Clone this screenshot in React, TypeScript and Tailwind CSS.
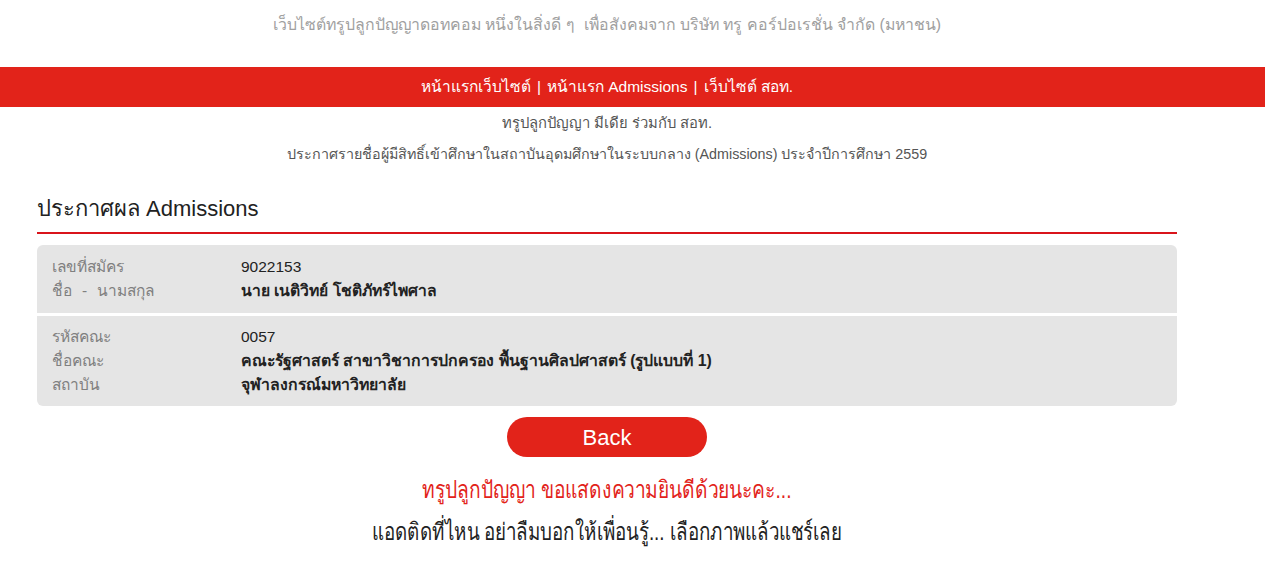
export default function App() {
  const font = { fontFamily: '"Liberation Sans", "Noto Sans", sans-serif' };

  return (
    <div className="min-h-[565px] bg-white" style={font}>
      {/* top tagline */}
      <div className="w-[1214px] h-[67px] flex items-start justify-center pt-[14px]">
        <p className="text-[15.85px] leading-[22px] text-[#a0a0a0]">
          เว็บไซต์ทรูปลูกปัญญาดอทคอม หนึ่งในสิ่งดี ๆ&nbsp; เพื่อสังคมจาก บริษัท ทรู คอร์ปอเรชั่น จำกัด (มหาชน)
        </p>
      </div>

      {/* red nav bar */}
      <div className="h-[40px] bg-[#e2231a]">
        <div className="w-[1214px] h-full flex items-center justify-center text-white text-[15.5px]">
          <span>หน้าแรกเว็บไซต์</span>
          <span className="mx-[6px] font-light">|</span>
          <span>หน้าแรก Admissions</span>
          <span className="mx-[6px] font-light">|</span>
          <span>เว็บไซต์ สอท.</span>
        </div>
      </div>

      <div className="w-[1214px] flex flex-col items-center text-[#555] leading-[20px] pt-[6px]">
        <p className="text-[14.8px]">ทรูปลูกปัญญา มีเดีย ร่วมกับ สอท.</p>
        <p className="mt-[11px] text-[14.3px]">
          ประกาศรายชื่อผู้มีสิทธิ์เข้าศึกษาในสถาบันอุดมศึกษาในระบบกลาง (Admissions) ประจำปีการศึกษา 2559
        </p>
      </div>

      <div className="ml-[37px] w-[1140px] mt-[30px]">
        <h1 className="text-[22px] leading-[30px] text-[#222] pb-[8px] border-b-2 border-[#d9141b]">
          ประกาศผล Admissions
        </h1>

        <div className="mt-[11px] rounded-[6px] overflow-hidden flex flex-col gap-[3px] leading-[24px]">
          <div className="bg-[#e5e5e5] px-[15px] py-[10px] grid grid-cols-[189px_1fr]">
            <span className="text-[#808080] text-[15.5px]">เลขที่สมัคร</span>
            <span className="text-[#222] text-[15.5px]">9022153</span>
            <span className="text-[#808080] text-[15.5px]">
              ชื่อ<span className="px-[10px]">-</span>นามสกุล
            </span>
            <span className="text-[#222] text-[15.7px] font-bold">นาย เนติวิทย์ โชติภัทร์ไพศาล</span>
          </div>
          <div className="bg-[#e5e5e5] px-[15px] py-[9px] grid grid-cols-[189px_1fr]">
            <span className="text-[#808080] text-[15.5px]">รหัสคณะ</span>
            <span className="text-[#222] text-[15.5px]">0057</span>
            <span className="text-[#808080] text-[15.5px]">ชื่อคณะ</span>
            <span className="text-[#222] text-[15.8px] font-bold">
              คณะรัฐศาสตร์ สาขาวิชาการปกครอง พื้นฐานศิลปศาสตร์ (รูปแบบที่ 1)
            </span>
            <span className="text-[#808080] text-[15.5px]">สถาบัน</span>
            <span className="text-[#222] text-[15.8px] font-bold">จุฬาลงกรณ์มหาวิทยาลัย</span>
          </div>
        </div>
      </div>

      <div className="w-[1214px] flex flex-col items-center">
        <button className="mt-[11px] w-[200px] h-[40px] rounded-full bg-[#e2231a] text-white text-[22px]">
          Back
        </button>
        <p className="mt-[17px] text-[24px] leading-[32px] text-[#e2231a] whitespace-nowrap scale-x-[0.8]">
          ทรูปลูกปัญญา ขอแสดงความยินดีด้วยนะคะ...
        </p>
        <p className="mt-[10px] text-[24px] leading-[32px] text-[#222] whitespace-nowrap scale-x-[0.78]">
          แอดติดที่ไหน อย่าลืมบอกให้เพื่อนรู้... เลือกภาพแล้วแชร์เลย
        </p>
      </div>
    </div>
  );
}
